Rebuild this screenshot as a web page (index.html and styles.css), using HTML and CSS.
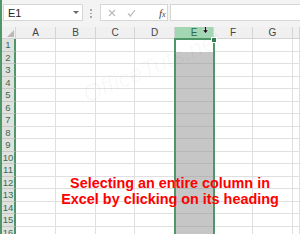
FILE: index.html
```html
<!DOCTYPE html>
<html>
<head>
<meta charset="utf-8">
<link rel="stylesheet" href="styles.css">
</head>
<body>
<div class="app">
  <div class="edge"></div>
  <div class="main">
    <div class="toolbar">
      <div class="namebox"><span class="ref">E1</span><span class="caret"></span></div>
      <div class="grip"></div>
      <div class="fxbox">
        <svg class="ico" width="8" height="8" viewBox="0 0 8 8"><path d="M1 1L7 7M7 1L1 7" stroke="#b9b9b9" stroke-width="1.1" fill="none"/></svg>
        <svg class="ico" width="9" height="8" viewBox="0 0 9 8"><path d="M1 4.5L3.4 7L8 1" stroke="#b9b9b9" stroke-width="1.2" fill="none"/></svg>
        <span class="fx">f<small>x</small></span>
      </div>
      <div class="formula"></div>
    </div>
    <div class="sheet">
      <div class="corner"><span class="tri"></span></div><div class="ch">A</div><div class="ch">B</div><div class="ch">C</div><div class="ch">D</div><div class="ch chs">E</div><div class="ch">F</div><div class="ch">G</div><div class="ch"></div>
      <div class="rh">1</div><div></div><div></div><div></div><div></div><div class="sel act"></div><div></div><div></div><div></div>
      <div class="rh">2</div><div></div><div></div><div></div><div></div><div class="sel"></div><div></div><div></div><div></div>
      <div class="rh">3</div><div></div><div></div><div></div><div></div><div class="sel"></div><div></div><div></div><div></div>
      <div class="rh">4</div><div></div><div></div><div></div><div></div><div class="sel"></div><div></div><div></div><div></div>
      <div class="rh">5</div><div></div><div></div><div></div><div></div><div class="sel"></div><div></div><div></div><div></div>
      <div class="rh">6</div><div></div><div></div><div></div><div></div><div class="sel"></div><div></div><div></div><div></div>
      <div class="rh">7</div><div></div><div></div><div></div><div></div><div class="sel"></div><div></div><div></div><div></div>
      <div class="rh">8</div><div></div><div></div><div></div><div></div><div class="sel"></div><div></div><div></div><div></div>
      <div class="rh">9</div><div></div><div></div><div></div><div></div><div class="sel"></div><div></div><div></div><div></div>
      <div class="rh">10</div><div></div><div></div><div></div><div></div><div class="sel"></div><div></div><div></div><div></div>
      <div class="rh">11</div><div></div><div></div><div></div><div></div><div class="sel"></div><div></div><div></div><div></div>
      <div class="rh">12</div><div></div><div></div><div></div><div></div><div class="sel"></div><div></div><div></div><div></div>
      <div class="rh">13</div><div></div><div></div><div></div><div></div><div class="sel"></div><div></div><div></div><div></div>
      <div class="rh">14</div><div></div><div></div><div></div><div></div><div class="sel"></div><div></div><div></div><div></div>
      <div class="rh">15</div><div></div><div></div><div></div><div></div><div class="sel"></div><div></div><div></div><div></div>
      <div class="rh">16</div><div></div><div></div><div></div><div></div><div class="sel"></div><div></div><div></div><div></div>

      <p class="watermark">OfficeTuts.net</p>
      <span class="selection"><span class="handle"></span></span>
      <svg class="cursor" width="7" height="9" viewBox="0 0 7 9"><path d="M2.5 0H4.5V5H6.5L3.5 8.5L0.5 5H2.5Z" fill="#111" stroke="#fff" stroke-width="0.6"/></svg>
      <p class="caption">Selecting an entire column in<br>Excel by clicking on its heading</p>
    </div>
  </div>
</div>
</body>
</html>
```

FILE: styles.css
```css
html, body {
  margin: 0;
  padding: 0;
}
body {
  width: 300px;
  height: 234px;
  overflow: hidden;
  background: #ffffff;
  font-family: "Liberation Sans", Arial, sans-serif;
}
.app {
  display: flex;
  width: 300px;
  height: 234px;
  overflow: hidden;
}
.edge {
  width: 2px;
  flex: none;
  background: #4f9669;
}
.main {
  flex: 1;
  min-width: 0;
  display: flex;
  flex-direction: column;
}
.toolbar {
  height: 27px;
  flex: none;
  box-sizing: border-box;
  background: #f3f3f3;
  display: flex;
  align-items: flex-start;
  padding: 4px 0 0 1px;
}
.namebox {
  width: 80px;
  height: 17px;
  box-sizing: border-box;
  background: #fff;
  border: 1px solid #d6d6d6;
  display: flex;
  align-items: center;
  justify-content: space-between;
  padding: 0 3px 0 4px;
}
.ref {
  font-size: 11px;
  color: #262626;
}
.caret {
  width: 0;
  height: 0;
  border-left: 3px solid transparent;
  border-right: 3px solid transparent;
  border-top: 3px solid #6a6a6a;
}
.grip {
  width: 2px;
  height: 9px;
  margin: 5px 0 0 7px;
  background: repeating-linear-gradient(#a8a8a8 0 2px, transparent 2px 3.5px);
}
.fxbox {
  width: 68px;
  height: 17px;
  box-sizing: border-box;
  margin-left: 8px;
  background: #fff;
  border: 1px solid #d6d6d6;
  display: flex;
  align-items: center;
  padding-left: 7px;
}
.ico {
  display: block;
  margin-right: 11px;
}
.fx {
  margin-left: 12px;
  font-family: "Liberation Serif", serif;
  font-style: italic;
  font-size: 11px;
  color: #444;
}
.fx small {
  font-size: 8px;
}
.formula {
  flex: 1;
  height: 17px;
  box-sizing: border-box;
  margin-left: 2px;
  background: #fff;
  border: 1px solid #d6d6d6;
  border-right: none;
}
.sheet {
  position: relative;
  flex: 1;
  display: grid;
  grid-template-columns: 14px 40px 40px 39px 40px 39px 39px 40px 1fr;
  grid-template-rows: 12px;
  grid-auto-rows: 13px 12px;
  overflow: hidden;
}
.sheet > div {
  box-sizing: border-box;
  border-right: 1px solid #e0e0e0;
  border-bottom: 1px solid #e0e0e0;
}
.sheet > .corner {
  background: #f0f0f0;
  border-right: 1px solid #d4d4d4;
  border-bottom: 1px solid #d4d4d4;
  position: relative;
}
.tri {
  position: absolute;
  right: 1px;
  bottom: 1px;
  width: 0;
  height: 0;
  border-left: 7px solid transparent;
  border-bottom: 7px solid #b8b8b8;
}
.sheet > .ch {
  background: #f0f0f0;
  border-right: 1px solid #d4d4d4;
  border-bottom: 1px solid #d4d4d4;
  font-size: 10px;
  line-height: 11px;
  text-align: center;
  color: #444;
}
.sheet > .chs {
  background: #a3d6b3;
  color: #2c6b45;
  border-bottom: 1px solid #4f9669;
}
.sheet > .rh {
  background: #dfe2df;
  border-right: 2px solid #4f9669;
  border-bottom: 1px solid #c4c9c4;
  font-size: 9.5px;
  line-height: 12px;
  text-align: center;
  color: #3d6b4f;
}
.sheet > .sel {
  background: #c6c6c6;
  border-bottom: 1px solid #b6b6b6;
}
.sheet > .act {
  background: #ffffff;
  border-bottom: none;
}
.selection {
  position: absolute;
  left: 172px;
  top: 11px;
  width: 41px;
  bottom: -2px;
  box-sizing: border-box;
  border: 2px solid #4f9669;
  pointer-events: none;
}
.handle {
  position: absolute;
  right: -4px;
  top: -3px;
  width: 4px;
  height: 4px;
  background: #2f7d4d;
  border: 1px solid #fff;
}
.cursor {
  position: absolute;
  left: 200px;
  top: -2px;
}
.watermark {
  position: absolute;
  margin: 0;
  left: 40px;
  top: 24px;
  width: 220px;
  line-height: 32px;
  text-align: center;
  font-family: "Liberation Sans", Arial, sans-serif;
  font-style: italic;
  font-size: 24px;
  color: rgba(0, 0, 0, 0.03);
  transform: rotate(-23deg);
  white-space: nowrap;
}
.caption {
  position: absolute;
  margin: 0;
  left: 38px;
  width: 260px;
  top: 148px;
  text-align: center;
  font-family: "Liberation Sans", Arial, sans-serif;
  font-weight: bold;
  font-size: 14.4px;
  line-height: 16px;
  color: #ff0000;
  white-space: nowrap;
}
```
